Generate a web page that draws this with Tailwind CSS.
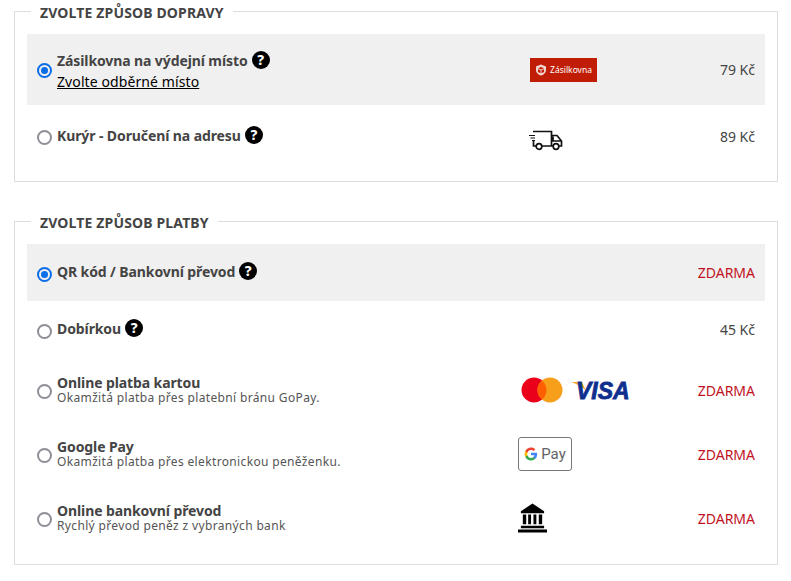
<!DOCTYPE html>
<html lang="cs">
<head>
  <meta charset="UTF-8" />
  <title>Doprava a platba</title>
  <script src="https://cdn.jsdelivr.net/npm/@tailwindcss/browser@4"></script>
</head>
<body class="bg-white font-['Noto_Sans',sans-serif] text-[#444] overflow-hidden">
  <div class="w-[791px] h-[581px] pl-[14px] pr-[13px] pt-[2px]">

    <!-- Doprava -->
    <fieldset class="border border-[#ddd] h-[180px] px-3 pt-[14px] min-w-0">
      <legend class="ml-[4px] px-[9px] h-[18px] text-[14px] leading-[21px] font-bold text-[#444] tracking-[0.15px]">ZVOLTE ZPŮSOB DOPRAVY</legend>

      <div class="flex h-[71px] bg-[#f0f0f0] pt-[16px]">
        <span class="ml-[10px] mt-[13px] w-[15px] h-[15px] rounded-full border-[2px] border-[#0b6ee8] flex items-center justify-center shrink-0"><span class="w-[7px] h-[7px] rounded-full bg-[#0b6ee8]"></span></span>
        <div class="ml-[5px] w-[473px]">
          <div class="flex items-center gap-1 h-5 text-[14px] tracking-[-0.1px] font-bold whitespace-nowrap">Zásilkovna na výdejní místo
            <span class="w-[18px] h-[18px] rounded-full bg-black text-white text-[14px] leading-[18px] text-center font-extrabold">?</span>
          </div>
          <div class="mt-[2px] text-[14px] leading-5 tracking-[0.1px] text-black underline">Zvolte odběrné místo</div>
        </div>
        <div class="mt-[8px] w-[67px] h-6 bg-[#c11d05] flex items-center justify-center gap-[3px] text-white text-[8.5px]">
          <svg width="12" height="12" viewBox="0 0 12 12"><path d="M6 .5 11 2.500V6c0 3-2.400 4.600-5 5.500C3.400 10.600 1 9 1 6V2.500Z" fill="#f3d6d0"/><path d="M6 3 9 4.300 6 5.600 3 4.300ZM3 5.200 5.500 6.300V9.200L3 8ZM9 5.200 6.500 6.300V9.200L9 8Z" fill="#c11d05"/></svg>
          Zásilkovna
        </div>
        <div class="flex-1 text-right pr-[10px] text-[14px] leading-5 pt-[10px]">79 Kč</div>
      </div>

      <div class="flex h-[64px] pt-[20px]">
        <span class="ml-[10px] mt-[5px] w-[15px] h-[15px] rounded-full border-[2px] border-[#8e8e96] shrink-0"></span>
        <div class="ml-[5px] w-[472px]">
          <div class="flex items-center gap-1 h-5 text-[14px] tracking-[-0.1px] font-bold whitespace-nowrap">Kurýr - Doručení na adresu
            <span class="w-[18px] h-[18px] rounded-full bg-black text-white text-[14px] leading-[18px] text-center font-extrabold">?</span>
          </div>
        </div>
        <svg class="mt-[4px]" width="34" height="22" viewBox="0 0 34 22" fill="none" stroke="#111" stroke-width="1.700">
          <path d="M4 2.500H22.500V17H13M7 17H4.500V11M22.500 6.500H28L32.500 12V17H30M24 17H22.500M24 7.500V12H32"/>
          <path d="M0 6.500H6M1.500 9H6M3 11.500H6" stroke-width="1"/>
          <circle cx="10" cy="17.500" r="2.800"/><circle cx="27" cy="17.500" r="2.800"/>
        </svg>
        <div class="flex-1 text-right pr-[10px] text-[14px] leading-5 pt-[2px]">89 Kč</div>
      </div>
    </fieldset>

    <!-- Platba -->
    <fieldset class="mt-[30px] border border-[#ddd] h-[353px] px-3 pt-[14px] min-w-0">
      <legend class="ml-[4px] px-[9px] h-[18px] text-[14px] leading-[21px] font-bold text-[#444] tracking-[0.15px]">ZVOLTE ZPŮSOB PLATBY</legend>

      <div class="flex h-[57px] bg-[#f0f0f0] pt-[17px]">
        <span class="ml-[10px] mt-[6px] w-[15px] h-[15px] rounded-full border-[2px] border-[#0b6ee8] flex items-center justify-center shrink-0"><span class="w-[7px] h-[7px] rounded-full bg-[#0b6ee8]"></span></span>
        <div class="ml-[5px] flex items-center gap-1 h-5 text-[14px] tracking-[-0.1px] font-bold whitespace-nowrap">QR kód / Bankovní převod
          <span class="w-[18px] h-[18px] rounded-full bg-black text-white text-[14px] leading-[18px] text-center font-extrabold">?</span>
        </div>
        <div class="flex-1 text-right pr-[10px] text-[14px] leading-5 pt-[2px] text-[#c1121f]">ZDARMA</div>
      </div>

      <div class="flex h-[57px] pt-[17px]">
        <span class="ml-[10px] mt-[6px] w-[15px] h-[15px] rounded-full border-[2px] border-[#8e8e96] shrink-0"></span>
        <div class="ml-[5px] flex items-center gap-1 h-5 text-[14px] tracking-[-0.1px] font-bold whitespace-nowrap">Dobírkou
          <span class="w-[18px] h-[18px] rounded-full bg-black text-white text-[14px] leading-[18px] text-center font-extrabold">?</span>
        </div>
        <div class="flex-1 text-right pr-[10px] text-[14px] leading-5 pt-[2px]">45 Kč</div>
      </div>

      <div class="flex h-[64px] items-center">
        <span class="ml-[10px] mt-[2px] w-[15px] h-[15px] rounded-full border-[2px] border-[#8e8e96] shrink-0"></span>
        <div class="ml-[5px] w-[463px] leading-[15px]">
          <div class="text-[14px] tracking-[-0.1px] font-bold">Online platba kartou</div>
          <div class="text-[12px] tracking-[0.35px] text-[#555]">Okamžitá platba přes platební bránu GoPay.</div>
        </div>
        <svg width="110" height="26" viewBox="0 0 110 26">
          <circle cx="14" cy="13" r="12.500" fill="#eb001b"/><circle cx="30" cy="13" r="12.500" fill="#f79e1b"/>
          <path d="M22 3.400a12.500 12.500 0 0 1 0 19.200a12.500 12.500 0 0 1 0-19.200Z" fill="#ff5f00"/>
          <path d="M51 5H62L66 14C63 10 57 7 51 5Z" fill="#f7a823"/>
          <text x="56" y="22" font-family="Liberation Sans" font-size="23" font-weight="700" font-style="italic" fill="#0f2f8f" stroke="#0f2f8f" stroke-width="0.800">VISA</text>
        </svg>
        <div class="flex-1 text-right pr-[10px] text-[14px] text-[#c1121f]">ZDARMA</div>
      </div>

      <div class="flex h-[64px] items-center">
        <span class="ml-[10px] mt-[2px] w-[15px] h-[15px] rounded-full border-[2px] border-[#8e8e96] shrink-0"></span>
        <div class="ml-[5px] w-[461px] leading-[15px]">
          <div class="text-[14px] tracking-[-0.1px] font-bold">Google Pay</div>
          <div class="text-[12px] tracking-[0.35px] text-[#555]">Okamžitá platba přes elektronickou peněženku.</div>
        </div>
        <div class="w-[54px] h-[34px] border border-[#777] rounded-[3px] flex items-center justify-center gap-[3px] text-[15px] text-[#5f6368] font-['Roboto',sans-serif]">
          <svg width="14" height="14" viewBox="0 0 48 48"><path fill="#4285f4" d="M45 24.500c0-1.600-.1-3.100-.4-4.500H24v8.600h11.800c-.5 2.700-2 5-4.400 6.600v5.500h7.100C42.700 36.900 45 31.200 45 24.500Z"/><path fill="#34a853" d="M24 46c5.900 0 10.900-2 14.500-5.300l-7.100-5.500c-2 1.300-4.500 2.100-7.400 2.100-5.700 0-10.500-3.800-12.200-9H4.500v5.700C8.100 41.100 15.500 46 24 46Z"/><path fill="#fbbc05" d="M11.800 28.300c-.4-1.300-.7-2.800-.7-4.300s.3-3 .7-4.300v-5.700H4.500C3 17 2 20.400 2 24s1 7 2.500 10Z"/><path fill="#ea4335" d="M24 10.700c3.200 0 6.100 1.100 8.400 3.300l6.300-6.300C34.900 4.200 29.900 2 24 2 15.500 2 8.100 6.900 4.500 14l7.300 5.700c1.700-5.200 6.500-9 12.200-9Z"/></svg>
          Pay
        </div>
        <div class="flex-1 text-right pr-[10px] text-[14px] text-[#c1121f]">ZDARMA</div>
      </div>

      <div class="flex h-[64px] items-center">
        <span class="ml-[10px] mt-[2px] w-[15px] h-[15px] rounded-full border-[2px] border-[#8e8e96] shrink-0"></span>
        <div class="ml-[5px] w-[461px] leading-[15px]">
          <div class="text-[14px] tracking-[-0.1px] font-bold">Online bankovní převod</div>
          <div class="text-[12px] tracking-[0.35px] text-[#555]">Rychlý převod peněz z vybraných bank</div>
        </div>
        <svg width="29" height="30" viewBox="0 0 30 30" fill="#000">
          <path d="M15 0 27 8V10H3V8Z"/>
          <path d="M5 11.500H8.500V21.500H5ZM10.500 11.500H13.500V21.500H10.500ZM16 11.500H19V21.500H16ZM21.500 11.500H25V21.500H21.500Z"/>
          <path d="M3 23H27V25.500H3ZM0 27H30V30H0Z"/>
        </svg>
        <div class="flex-1 text-right pr-[10px] text-[14px] text-[#c1121f]">ZDARMA</div>
      </div>
    </fieldset>
  </div>
</body>
</html>
